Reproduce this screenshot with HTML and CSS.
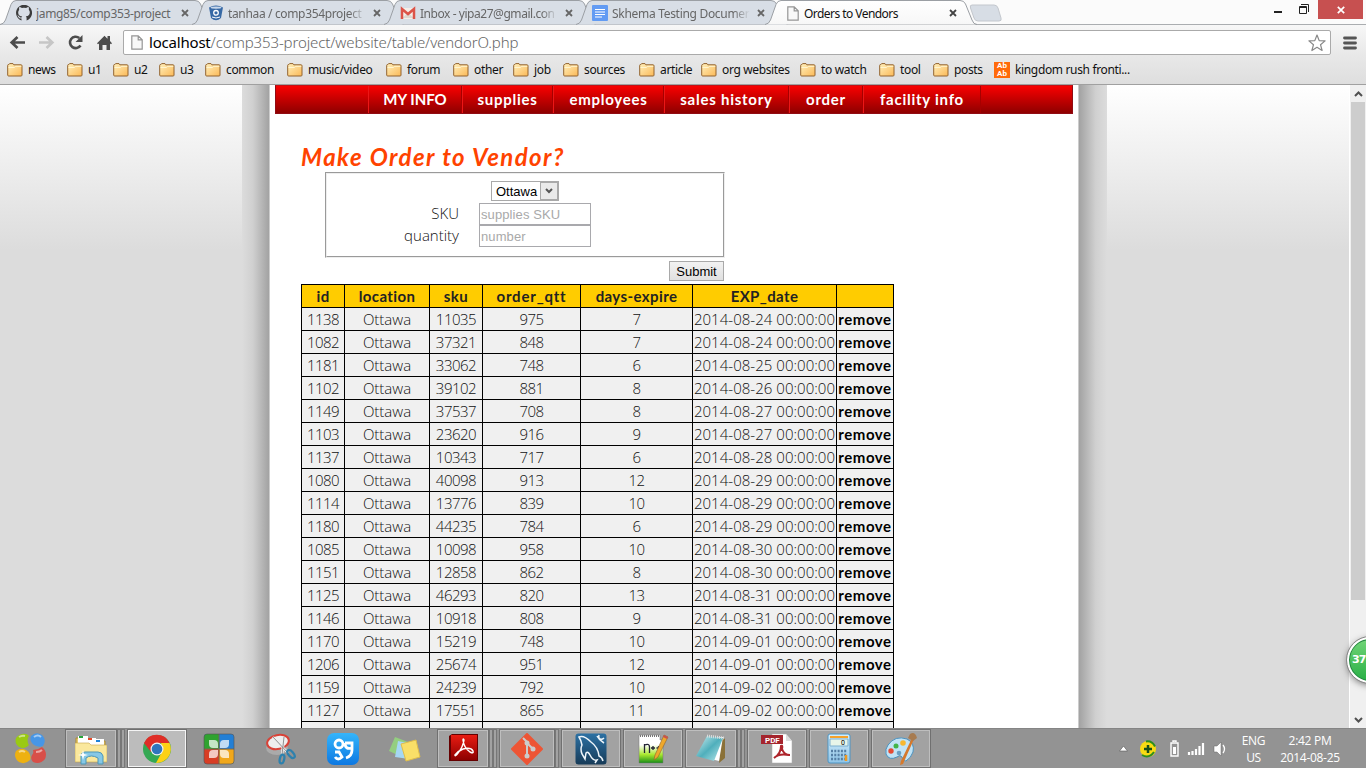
FILE: index.html
```html
<!DOCTYPE html>
<html lang="en">
<head>
<meta charset="utf-8">
<title>Orders to Vendors</title>
<link rel="stylesheet" href="styles.css">
</head>
<body>
<svg class="defs" width="0" height="0">
  <defs>
    <linearGradient id="folderFill" x2="1" y2="1"><stop offset="0" stop-color="#fff0bd"/><stop offset="1" stop-color="#fbb957"/></linearGradient>
    <linearGradient id="activeTab" x2="0" y2="1"><stop offset="0" stop-color="#fff"/><stop offset="1" stop-color="#f7f7f7"/></linearGradient>
    <linearGradient id="redFill" x2="0" y2="1"><stop offset="0" stop-color="#e81c12"/><stop offset="1" stop-color="#8d0000"/></linearGradient>
    <linearGradient id="blueFill" x2="0" y2="1"><stop offset="0" stop-color="#35b5fb"/><stop offset="1" stop-color="#0d78e2"/></linearGradient>
    <linearGradient id="seaFill" x2="0" y2="1"><stop offset="0" stop-color="#2c71a4"/><stop offset="1" stop-color="#173b58"/></linearGradient>
    <linearGradient id="nppFill" x2="0" y2="1"><stop offset=".35" stop-color="#fff"/><stop offset=".7" stop-color="#a9e82f"/><stop offset="1" stop-color="#188d17"/></linearGradient>
    <linearGradient id="tealFill" x2="1" y2="1"><stop offset="0" stop-color="#d4eff1"/><stop offset=".5" stop-color="#4fafbc"/><stop offset="1" stop-color="#bde9ec"/></linearGradient>
    <linearGradient id="calcFill" x2="0" y2="1"><stop offset="0" stop-color="#d5eefb"/><stop offset="1" stop-color="#8fc5e8"/></linearGradient>
    <symbol id="folder" viewBox="0 0 16 14"><path d="M.7 12.2V2.4Q.7 1.500 1.600 1.500H2L2.600.6H6l.8 1.200h7.200Q15 1.800 15 2.800v9.400Q15 13 14 13H1.700Q.7 13 .7 12.200Z" fill="url(#folderFill)" stroke="#92632f"/><path d="M1.500 4.500h6l1-1.200h5.800" fill="none" stroke="#fff5cf"/></symbol>
    <symbol id="page" viewBox="0 0 12 15"><path d="M.8.8h6.400l4 4v9.400H.8zM7.200.8v4h4" fill="#f8f8f8" stroke="#959595" stroke-width="1.200"/></symbol>
    <symbol id="x" viewBox="0 0 8 8"><path d="m1 1 6 6m0-6L1 7" stroke="currentColor" stroke-width="1.800"/></symbol>
    <symbol id="tab" viewBox="0 0 212 25"><path d="M0 24.500Q4 24 5.500 20L11 4.500Q12.500.5 16 .5H195Q199 .5 200.500 4L207 20Q208.500 24.500 212 24.500" stroke="#9b9fa4"/></symbol>
  </defs>
</svg>

<header class="browser">
  <div class="tabs">
    <div class="tab"><svg class="tab-shape"><use href="#tab"/></svg>
      <svg class="fav" viewBox="0 0 16 16"><path d="M5.500 15.400v-2q-2.200.4-3.200-1.500-.5-1-1.200-1.400 1.500-.2 2.500 1.400.8 1 2 .6.1-.8.6-1.200C3 11 2.200 9.300 2.200 7.200q0-1.500 1-2.500-.4-1.300.2-2.600 1.200 0 2.500 1 2-.5 4.200 0 1.300-1 2.500-1 .5 1.300.2 2.600 1 1 1 2.500c0 2.200-1 3.800-4 4.100q.8.7.8 2v2.100A8 8 0 1 0 5.500 15.400Z" fill="#3c3c3c"/></svg>
      <span class="tab-text t1">jamg85/comp353-project</span><svg class="close"><use href="#x"/></svg></div>
    <div class="tab"><svg class="tab-shape"><use href="#tab"/></svg>
      <svg class="fav" viewBox="0 0 16 16"><path d="M1 2.500 3 13q5 4.500 10 0l2-10.500Q8-1.500 1 2.500Z" fill="#3769a5"/><ellipse cx="8" cy="2.600" rx="5.500" ry="1.200" fill="#c8d8ec"/><circle cx="8" cy="7.800" r="2.300" fill="#3769a5" stroke="#fff" stroke-width="1.300"/><path d="M4 12q4 2 8 0" stroke="#fff" fill="none"/></svg>
      <span class="tab-text t2">tanhaa / comp354project</span><svg class="close"><use href="#x"/></svg></div>
    <div class="tab"><svg class="tab-shape"><use href="#tab"/></svg>
      <svg class="fav" viewBox="0 0 16 16"><path d="M1 3h14v11H1z" fill="#f4eee8"/><path d="m2 13 6-5 6 5z" fill="#ddd7cf"/><path d="M2 14V4l6 5 6-5v10" fill="none" stroke="#dc5449" stroke-width="2.500"/></svg>
      <span class="tab-text t3">Inbox - yipa27@gmail.con</span><svg class="close"><use href="#x"/></svg></div>
    <div class="tab"><svg class="tab-shape"><use href="#tab"/></svg>
      <svg class="fav" viewBox="0 0 16 16"><rect width="16" height="16" rx="1" fill="#629bf3"/><path d="M3 4.500h10M3 7h10M3 9.500h10M3 12h7" stroke="#fff"/></svg>
      <span class="tab-text t4">Skhema Testing Documer</span><svg class="close"><use href="#x"/></svg></div>
    <div class="tab active"><svg class="tab-shape"><use href="#tab"/></svg>
      <svg class="fav pagefav"><use href="#page"/></svg>
      <span class="tab-text t5">Orders to Vendors</span><svg class="close"><use href="#x"/></svg></div>
    <svg class="new-tab" viewBox="0 0 34 18"><path d="M3 1h22q3 0 4 3l3 10q1 3-2 3H9q-3 0-4-3L1.500 4Q.5 1 3 1Z" fill="#d7dde5" stroke="#c3c7cd"/></svg>
    <div class="window-buttons">
      <svg viewBox="0 0 46 20"><path d="M2 12h8" stroke="#222" stroke-width="2"/><path d="M27.500 6.500h7v7h-7zM29 4.500h7.500V12" fill="none" stroke="#222"/><path d="M27 7.500h8" stroke="#222"/></svg>
      <div class="window-close"><svg viewBox="0 0 8 8"><path d="m.8.8 6.400 6.400m0-6.400L.8 7.200" stroke="#fff" stroke-width="1.700"/></svg></div>
    </div>
  </div>
  <div class="toolbar">
    <svg class="nav-icons" viewBox="0 0 123 31">
      <g fill="none" stroke="#4c4c4c" stroke-width="2.700"><path d="M25 17.500H12M17.500 12l-5.800 5.500 5.800 5.500"/><path d="M39 17.500h13M46.500 12l5.800 5.500-5.800 5.500" stroke="#c6c6c6"/><path d="M80.500 20.500a5.700 5.700 0 1 1-1.200-7.500" stroke-width="2.600"/></g>
      <path d="M82.500 10v7h-7z" fill="#4c4c4c"/><path d="m97 18.200 7.500-7.500 3 3V11h2.500v5l2 2.200-1 1-1-.8V25h-3.500v-5h-4v5H99v-6.600l-1 .8z" fill="#4c4c4c"/>
    </svg>
    <div class="address"><svg class="addr-page"><use href="#page"/></svg><span class="url"><b>localhost</b>/comp353-project/website/table/vendorO.php</span>
      <svg class="star" viewBox="0 0 18 18"><path d="m9 1 2.200 5.600 5.900.3-4.600 3.800 1.600 5.800L9 13.300l-5.100 3.200 1.600-5.800L.9 6.900l5.900-.3z" fill="#fff" stroke="#888" stroke-width="1.200" stroke-linejoin="round"/></svg></div>
    <svg class="menu" viewBox="0 0 14 14"><path d="M1.500 2h11M1.500 7h11M1.500 12h11" stroke="#555" stroke-width="2.800" stroke-linecap="round"/></svg>
  </div>
  <nav class="bookmarks">
    <span><svg><use href="#folder"/></svg>news</span><span><svg><use href="#folder"/></svg>u1</span><span><svg><use href="#folder"/></svg>u2</span><span><svg><use href="#folder"/></svg>u3</span><span><svg><use href="#folder"/></svg>common</span><span><svg><use href="#folder"/></svg>music/video</span><span><svg><use href="#folder"/></svg>forum</span><span><svg><use href="#folder"/></svg>other</span><span><svg><use href="#folder"/></svg>job</span><span><svg><use href="#folder"/></svg>sources</span><span><svg><use href="#folder"/></svg>article</span><span><svg><use href="#folder"/></svg>org websites</span><span><svg><use href="#folder"/></svg>to watch</span><span><svg><use href="#folder"/></svg>tool</span><span><svg><use href="#folder"/></svg>posts</span><span><i class="abab">Ab<br>Ab</i>kingdom rush fronti...</span>
  </nav>
</header>

<div class="viewport">
  <div class="side left"></div>
  <div class="shade from-left"></div>
  <main>
    <nav class="site-nav"><span></span><a>MY INFO</a><a>supplies</a><a>employees</a><a>sales history</a><a>order</a><a>facility info</a><span></span></nav>
    <h1>Make Order to Vendor?</h1>
    <form>
      <div class="fields">
        <div class="select"><span>Ottawa</span><i><svg viewBox="0 0 8 6"><path d="m1 1 3 3 3-3" fill="none" stroke="#555" stroke-width="2"/></svg></i></div>
        <label>SKU</label><div class="input">supplies SKU</div>
        <label>quantity</label><div class="input">number</div>
      </div>
      <div class="submit">Submit</div>
    </form>
    <table>
      <colgroup><col class="c1"><col class="c2"><col class="c3"><col class="c4"><col class="c5"><col class="c6"><col class="c7"></colgroup>
      <tr><th>id<th>location<th>sku<th>order_qtt<th>days-expire<th>EXP_date<th></tr>
      <tr><td>1138<td>Ottawa<td>11035<td>975<td>7<td>2014-08-24 00:00:00<td>remove</tr>
      <tr><td>1082<td>Ottawa<td>37321<td>848<td>7<td>2014-08-24 00:00:00<td>remove</tr>
      <tr><td>1181<td>Ottawa<td>33062<td>748<td>6<td>2014-08-25 00:00:00<td>remove</tr>
      <tr><td>1102<td>Ottawa<td>39102<td>881<td>8<td>2014-08-26 00:00:00<td>remove</tr>
      <tr><td>1149<td>Ottawa<td>37537<td>708<td>8<td>2014-08-27 00:00:00<td>remove</tr>
      <tr><td>1103<td>Ottawa<td>23620<td>916<td>9<td>2014-08-27 00:00:00<td>remove</tr>
      <tr><td>1137<td>Ottawa<td>10343<td>717<td>6<td>2014-08-28 00:00:00<td>remove</tr>
      <tr><td>1080<td>Ottawa<td>40098<td>913<td>12<td>2014-08-29 00:00:00<td>remove</tr>
      <tr><td>1114<td>Ottawa<td>13776<td>839<td>10<td>2014-08-29 00:00:00<td>remove</tr>
      <tr><td>1180<td>Ottawa<td>44235<td>784<td>6<td>2014-08-29 00:00:00<td>remove</tr>
      <tr><td>1085<td>Ottawa<td>10098<td>958<td>10<td>2014-08-30 00:00:00<td>remove</tr>
      <tr><td>1151<td>Ottawa<td>12858<td>862<td>8<td>2014-08-30 00:00:00<td>remove</tr>
      <tr><td>1125<td>Ottawa<td>46293<td>820<td>13<td>2014-08-31 00:00:00<td>remove</tr>
      <tr><td>1146<td>Ottawa<td>10918<td>808<td>9<td>2014-08-31 00:00:00<td>remove</tr>
      <tr><td>1170<td>Ottawa<td>15219<td>748<td>10<td>2014-09-01 00:00:00<td>remove</tr>
      <tr><td>1206<td>Ottawa<td>25674<td>951<td>12<td>2014-09-01 00:00:00<td>remove</tr>
      <tr><td>1159<td>Ottawa<td>24239<td>792<td>10<td>2014-09-02 00:00:00<td>remove</tr>
      <tr><td>1127<td>Ottawa<td>17551<td>865<td>11<td>2014-09-02 00:00:00<td>remove</tr>
      <tr><td><td><td><td><td><td><td></tr>
    </table>
  </main>
  <div class="shade from-right"></div>
  <div class="side right"></div>
  <div class="scrollbar"><svg viewBox="0 0 15 17"><path d="m4 11 3.500-3.500L11 11" fill="none" stroke="#505050" stroke-width="2"/></svg><div class="thumb"></div><svg viewBox="0 0 15 17"><path d="M4 7l3.500 3.500L11 7" fill="none" stroke="#505050" stroke-width="2"/></svg></div>
  <div class="badge">37</div>
</div>

<footer class="taskbar">
  <div class="start"><svg viewBox="0 0 32 32"><path d="M8 2Q13 1 15 4 12 8 15 13 11 18 5 15 0 11 2 6 4 3 8 2Z" fill="#9aca12"/><path d="M17 4q5-5 11-1 5 5 1 11-4 2-9-1-5-4-3-9Z" fill="#4796e6"/><path d="M2 19q5-4 10-1 6 4 4 10-5 5-11 2-6-5-3-11Z" fill="#eeb111"/><path d="M19 18q5 0 9-3 6 5 3 12-5 6-12 3-3-3-1-7 2-2 1-5Z" fill="#d84f49"/><path d="M5 5q3-2 6-1M20 5q4-3 7 0M5 20q3-2 6 0M22 20q4 0 6-2" stroke="#fff" opacity=".5" stroke-width="2" fill="none"/></svg></div>
  <div class="task stack"><div><svg viewBox="0 0 32 32"><path d="M1 5h12l2 3h15v19H1z" fill="#e6cb70" stroke="#b08c31"/><path d="M3 3h10v8H3zM12 5h9v7h-9zM20 6h9v8h-9z" fill="#fff"/><path d="M4 4h4" stroke="#27a63b" stroke-width="2"/><path d="M13 6h4" stroke="#e64626" stroke-width="2"/><path d="M21 8h4" stroke="#1d83dc" stroke-width="2"/><path d="M0 10h14l2 2h16v17H0z" fill="#fae89d" stroke="#c8a64c" stroke-width=".6"/><path d="M6 31v-9q1-3 4-3h13q4 0 5 4v8h-5v-6q-7-4-12 0v6z" fill="#86c8e6" stroke="#4d97b7"/><path d="m8 17 1 4 4 1-4 1-1 4-1-4-4-1 4-1z" fill="#fff"/></svg></div><i></i><i></i></div>
  <div class="task current"><div><svg viewBox="0 0 32 32"><circle cx="16" cy="16" r="14" fill="#34a853"/><path d="M3 10A14 14 0 0 1 28.500 10H16L10 19Z" fill="#df2d27"/><path d="M28.500 10A14 14 0 0 1 15 30L22 17 20 10Z" fill="#fcd116"/><circle cx="16" cy="16" r="6.500" fill="#f2f2f2"/><circle cx="16" cy="16" r="5.300" fill="#2f75bd"/></svg></div></div>
  <div class="task plain"><div><svg viewBox="0 0 32 32"><rect x="1" y="1" width="30" height="30" rx="3" fill="#237fd5"/><path d="M1 4q0-3 3-3h12v15H1z" fill="#2fa32f"/><path d="M1 16h15v15H4q-3 0-3-3z" fill="#d83d24"/><path d="M16 16h15v12q0 3-3 3H16z" fill="#f0a71b"/><path d="M6 7h5q4 0 4 4v4h-5q-4 0-4-4zM26 7h-5q-4 0-4 4v4h5q4 0 4-4zM6 25h5q4 0 4-4v-4h-5q-4 0-4 4zM26 25h-5q-4 0-4-4v-4h5q4 0 4 4z" fill="#fff" opacity=".72"/><path d="M16 1v30M1 16h30" stroke="#765"/><rect x="1" y="1" width="30" height="30" rx="3" fill="none" stroke="#555" stroke-opacity=".6"/></svg></div></div>
  <div class="task plain"><div><svg viewBox="0 0 32 32"><ellipse cx="12" cy="15" rx="11" ry="7" fill="#aaa"/><ellipse cx="13" cy="9" rx="11" ry="7" fill="#eee" stroke="#d84237" stroke-width="2" transform="rotate(-12 13 9)"/><path d="m8 4 15 16M19 4l-2 18" stroke="#eee" stroke-width="2.500"/><path d="m8 4 15 16M19 4l-2 18" stroke="#777" stroke-width=".8"/><ellipse cx="17" cy="26" rx="2.200" ry="4.500" fill="none" stroke="#2e81ad" stroke-width="2.300" transform="rotate(12 17 26)"/><ellipse cx="26" cy="21" rx="2.500" ry="4.800" fill="none" stroke="#2e81ad" stroke-width="2.300" transform="rotate(-40 26 21)"/></svg></div></div>
  <div class="task plain"><div><svg viewBox="0 0 32 32"><rect width="32" height="32" rx="7" fill="url(#blueFill)"/><g fill="none" stroke="#fff" stroke-width="2.800"><circle cx="12" cy="11" r="4"/><path d="M8 19h4l3 5q-4 4-7 0M18 10h7v7q0 6-6 8M18 10q0 7 7 5"/></g></svg></div></div>
  <div class="task plain"><div><svg viewBox="0 0 32 32"><path d="m6 4 13 5-6 15-13-6z" fill="#94ce80"/><path d="m9 8 14 3-3 15-14-2z" fill="#a5d7f4"/><path d="m12 11 15-4 4 17-14 4z" fill="#f9df68" stroke="#dfbd4b"/></svg></div></div>
  <div class="task stack"><div><svg viewBox="0 0 32 32"><path d="M2 3 5 1h26v27H2z" fill="#600"/><rect x="4" y="2" width="26" height="25" fill="url(#redFill)"/><path d="M8 22q3-4 8-6 8-2 10 2 1 3-3 1-6-4-7-12 0-2 1 0-1 7-6 13-3 4-3 2Z" fill="none" stroke="#fff" stroke-width="1.500"/></svg></div><i></i><i></i></div>
  <div class="task stack"><div><svg viewBox="0 0 32 32"><path d="m16 1 15 15-15 15L1 16z" fill="#ed5535" stroke="#ed5535" stroke-width="2" stroke-linejoin="round"/><path d="m12 5 4 4v15m0-14 6 6" fill="none" stroke="#ccc" stroke-width="2"/><g fill="#ccc"><circle cx="16" cy="10" r="2.500"/><circle cx="16" cy="23" r="2.500"/><circle cx="22" cy="16" r="2.500"/></g></svg></div><i></i></div>
  <div class="task"><div><svg viewBox="0 0 32 32"><rect x=".5" y=".5" width="31" height="31" rx="3" fill="url(#seaFill)"/><path d="M28 28q-1-4-4-5-1-9-8-14Q9 2 4 4q2 3 3 8-2 4 0 9l3 5 1-6q2-2 4 2 3 6 7 5l-2 3M22 3q2 4 7 7M24 2q-1 3 1 4t4-1" fill="none" stroke="#eef5fa" stroke-width="1.500"/></svg></div></div>
  <div class="task"><div><svg viewBox="0 0 32 32"><path d="M2 2h21v5h3v23H2z" fill="url(#nppFill)" stroke="#777" stroke-width=".5"/><path d="M3 3h20" stroke="#777" stroke-width="2" stroke-dasharray="1 1"/><path d="M7.500 20v-9M7.500 12q5-2 5 2v6M14 15h4M16 13v4M19.500 15h4M21.500 13v4" fill="none" stroke="#223" stroke-width="1.300"/><path d="m27 2 4 2-10 20-4 3 1-5z" fill="#efa82b" stroke="#8b6230" stroke-width=".6"/><path d="m27 2 4 2-1 2-4-2z" fill="#c85250"/></svg></div></div>
  <div class="task stack"><div><svg viewBox="0 0 32 32"><path d="m27 4 3 2v19l-6 5z" fill="#8a7138"/><path d="m28 4-4 24-20-5 8-19z" fill="#fff"/><path d="m12 3 16 2-9 23L1 23z" fill="url(#tealFill)"/><path d="m12 3 17 2" stroke="#ddd" stroke-width="3" stroke-dasharray="1 1"/></svg></div><i></i><i></i></div>
  <div class="task"><div><svg viewBox="0 0 32 32"><path d="M11 1h14l6 7v22H11z" fill="#fff" stroke="#aaa" stroke-width=".5"/><path d="M25 1v7h6" fill="#ddd"/><path d="M0 2h22v9H0z" fill="#a5242d"/><text x="4" y="9.500" fill="#fff" font-family="Roboto" font-size="8" font-weight="700">PDF</text><path d="M13 25q7-4 7-12 2-1 1 3 2 6 8 6M13 25q5-5 15-3" fill="none" stroke="#ae252c" stroke-width="2"/></svg></div></div>
  <div class="task"><div><svg viewBox="0 0 32 32"><rect x="5" y="1" width="22" height="29" rx="2" fill="url(#calcFill)" stroke="#4d94c3"/><path d="M7 4h18" stroke="#f5a22b" stroke-width="2"/><path d="M7 6h18v7H7z" fill="#e8f5e9" stroke="#7cafcf"/><text x="18" y="12" font-family="Roboto" font-size="7">0</text><path d="M8 18h16M8 22h16M8 26h16" stroke="#557fa5" stroke-width="2.500" stroke-dasharray="2 1.300"/><path d="M23 22v6" stroke="#ee9a23" stroke-width="2.500"/></svg></div></div>
  <div class="task"><div><svg viewBox="0 0 32 32"><path d="M3 12Q10 2 22 6q8 4 6 13-2 6-7 9-3 1-4-4-2-3-5 0-8 4-11-3-1-5 2-9Z" fill="#c1e3f5" stroke="#4a91bf"/><circle cx="6" cy="18" r="2.700" fill="#e64b34"/><circle cx="11" cy="13" r="2.500" fill="#42b549"/><circle cx="18" cy="10" r="2.800" fill="#f7b72f"/><circle cx="14" cy="20" r="2.300" fill="#6a9fc2"/><path d="m27 5 2 1-11 25-3 1 1-4z" fill="#d5792c"/><path d="M25 1q5-3 7 4l-4 3-5-3z" fill="#a77b50"/></svg></div></div>
  <div class="tray">
    <svg viewBox="0 0 116 26"><path d="M.5 16h8L4.500 11z" fill="#fff" stroke="#555" stroke-width=".6"/><circle cx="29" cy="14" r="8" fill="#f8db12"/><path d="M27 6.500q6-1 9 5M23 20q7 4 12-3" stroke="#2c8d20" stroke-width="2" fill="none"/><path d="M29 10v8M25 14h8" stroke="#164e18" stroke-width="2.500"/><g fill="none" stroke="#fff" stroke-width="1.400"><path d="M52 8h7v13h-7zM54 7V6h3v1"/></g><path d="M54 12h3v7h-3z" fill="#fff"/><path d="M70 20v-3M73.500 20v-4M77 20v-6M80.500 20V11M84 20V8" stroke="#fff" stroke-width="2.200"/><path d="M95 11h3l4-4v14l-4-4h-3z" fill="#fff" stroke="#666" stroke-width=".5"/><path d="M104 10q3 4 0 8" fill="none" stroke="#fff" stroke-width="1.300"/></svg>
    <div class="lang">ENG<br>US</div><div class="clock">2:42 PM<br>2014-08-25</div>
  </div>
</footer>
</body>
</html>
```
FILE: styles.css
```css
* { box-sizing: border-box; }
body { margin: 0; width: 1366px; height: 768px; overflow: hidden; display: flex; flex-direction: column; background: #fff; font-family: "Noto Sans", sans-serif; font-size: 12px; color: #222; }
svg { display: block; flex: none; }
.defs { position: absolute; }

.browser { height: 85px; flex: none; border-bottom: 1px solid #a0a0a0; background: #fbfbfb; }
.tabs { height: 24px; display: flex; padding-left: 4px; }
.tab { position: relative; width: 192px; height: 24px; display: flex; align-items: center; padding: 2px 0 0 12px; color: #666; }
.tab-shape { position: absolute; left: -4px; top: 0; width: 212px; height: 25px; fill: #d8dee6; }
.active .tab-shape { fill: url(#activeTab); left: -7px; }
.tab.active { width: 202px; padding-left: 15px; color: #111; z-index: 2; }
.fav { position: relative; width: 16px; height: 16px; margin-right: 4px; }
.pagefav { width: 12px; height: 15px; margin-right: 5px; }
.tab-text { position: relative; width: 138px; overflow: hidden; white-space: nowrap; letter-spacing: -.35px; }
.tab-text.t3 { letter-spacing: -.45px; }
.tab-text.t4 { letter-spacing: -.3px; }
.tab-text.t5 { letter-spacing: -.55px; }
.tab:not(.active) .tab-text { -webkit-mask-image: linear-gradient(90deg, #000 88%, transparent); }
.tab .tab-text.t1 { -webkit-mask-image: none; }
.close { position: relative; width: 8px; height: 8px; margin-left: 7px; color: #666; }
.active .close { color: #444; }
.new-tab { width: 34px; height: 18px; margin: 4px 0 0 -5px; position: relative; }
.window-buttons { margin-left: auto; margin-right: 3px; display: flex; }
.window-buttons > svg { width: 46px; height: 20px; }
.window-close { width: 45px; height: 19px; background: #c75050; display: flex; align-items: center; justify-content: center; }
.window-close svg { width: 8px; height: 8px; }

.toolbar { height: 32px; border-top: 1px solid #aaadb0; display: flex; background: linear-gradient(#f7f7f7, #e8e8e8); }
.nav-icons { width: 123px; height: 31px; }
.address { width: 1208px; height: 25px; margin-top: 5px; border: 1px solid #aaa; border-radius: 2px; background: #fff; display: flex; align-items: center; padding-left: 7px; }
.addr-page { width: 12px; height: 15px; }
.url { margin: -1px 0 0 6px; font-size: 15px; font-weight: 300; color: #666; white-space: nowrap; letter-spacing: -.12px; }
.url b { color: #000; font-weight: 400; letter-spacing: -.2px; }
.star { width: 18px; height: 18px; margin-left: auto; margin-right: 4px; }
.menu { width: 14px; height: 14px; margin: 11px 0 0 12px; }
.bookmarks { height: 28px; display: grid; grid-template-columns: 60px 46px 46px 46px 82px 99px 67px 60px 50px 76px 62px 99px 79px 54px 61px 1fr; align-items: center; padding: 0 0 1px 7px; background: linear-gradient(#e8e8e8, #dedede); color: #111; letter-spacing: -.35px; }
.bookmarks span { display: flex; align-items: center; white-space: nowrap; }
.bookmarks svg { width: 16px; height: 14px; margin-right: 5px; }
.abab { width: 16px; height: 16px; margin-right: 5px; background: #ff6a0a; color: #fff; font: 700 8px/8px Roboto, sans-serif; text-align: center; letter-spacing: 0; }

.viewport { position: relative; height: 643px; flex: none; overflow: hidden; display: flex; background: #dcdcdc; }
.side { width: 242px; height: 165px; background: linear-gradient(#fff, #dcdcdc); flex: none; }
.shade { width: 27px; flex: none; background: linear-gradient(90deg, #dcdcdc, #d0d0d0 40%, #a2a2a2); }
.shade.from-right { width: 28px; background: linear-gradient(270deg, #dcdcdc, #d0d0d0 40%, #a2a2a2); }
main { width: 810px; flex: none; padding: 0 5px; border: solid #ccc; border-width: 0 1px; background: #fff; font-family: "Open Sans", sans-serif; }
.site-nav { height: 29px; border: 1px solid #910c14; border-top-color: #c41116; display: grid; grid-template-columns: 92px 94px 91px 111px 125px 74px 118px 1fr; background: linear-gradient(#f90000, #8e0000); color: #fff; font: 700 15px/27px Lato, sans-serif; text-align: center; letter-spacing: .75px; }
.site-nav a { border-left: 1px solid #ec1717; border-right: 1px solid #a60000; white-space: nowrap; }
.site-nav a:nth-child(2) { letter-spacing: 0; }
h1 { margin: 28px 0 0 26px; height: 30px; color: #ff4300; font: italic 700 24px/29px Lato, sans-serif; letter-spacing: 1.42px; white-space: nowrap; }
form { width: 400px; margin-left: 50px; }
.fields { height: 86px; border: 2px groove #eee; padding: 7px 0 0 0; display: grid; grid-template-columns: 132px 20px 112px; grid-template-rows: 22px 22px 22px; }
.select { grid-column: 1 / -1; margin-left: 164px; width: 68px; height: 20px; border: 1px solid #a9a9a9; display: flex; justify-content: space-between; color: #000; font: 13px/19px "Liberation Sans", sans-serif; padding-left: 4px; }
.select i { width: 18px; border: 1px solid #a9a9a9; background: #eaeaea; display: flex; align-items: center; justify-content: center; }
.select svg { width: 8px; height: 6px; }
label { text-align: right; font-size: 15px; font-weight: 300; line-height: 20px; white-space: nowrap; color: #111; }
.input { grid-column: 3; height: 22px; border: 1px solid #a9a9ad; color: #a9a9a9; background: #fff; font: 13px/21px "Liberation Sans", sans-serif; padding-left: 1px; letter-spacing: .1px; }
.submit { width: 55px; height: 20px; margin: 3px 1px 3px auto; border: 1px solid #a9a9a9; background: linear-gradient(#f2f2f2, #e0e0e0); color: #000; font: 13px/19px "Liberation Sans", sans-serif; text-align: center; }
table { width: 593px; margin-left: 26px; table-layout: fixed; border-collapse: separate; border-spacing: 0; border: solid #000; border-width: 1px 0 0 1px; }
.c1 { width: 43px; } .c2 { width: 85px; } .c3 { width: 53px; } .c4 { width: 98px; } .c5 { width: 112px; } .c6 { width: 144px; } .c7 { width: 57px; }
th, td { height: 23px; padding: 1px 0; border: solid #000; border-width: 0 1px 1px 0; line-height: 20px; text-align: center; white-space: nowrap; }
th { background: #fc0; font: 700 15px/20px Lato, sans-serif; letter-spacing: .4px; }
th:nth-child(4) { letter-spacing: .8px; }
td { background: #f0f0f0; color: #111; font-weight: 300; font-size: 15px; letter-spacing: -.5px; }
td:nth-child(2) { letter-spacing: 0; }
td:nth-child(6) { letter-spacing: .03px; }
td:last-child { font: 700 15px/20px Lato, sans-serif; color: #000; letter-spacing: .55px; }
.scrollbar { width: 17px; margin-left: auto; padding: 0 1px; border-left: 1px solid #fff; background: #f0f0f0; display: flex; flex-direction: column; }
.scrollbar svg { width: 15px; height: 17px; }
.thumb { height: 498px; background: #cdcdcd; margin-bottom: auto; }
.badge { position: absolute; left: 1347px; top: 552px; width: 46px; height: 46px; border: 2px solid #fff; border-radius: 50%; outline: 1px solid #888; background: linear-gradient(#72d578, #28af45); box-shadow: inset 0 0 0 1px #248342, 0 2px 7px #777; color: #fff; font: 700 11px/42px "DejaVu Sans", sans-serif; padding-left: 3px; letter-spacing: -1px; }

.taskbar { height: 40px; flex: none; display: grid; grid-template-columns: 65px repeat(14, 62px) 1fr; border-top: 1px solid #858585; background: #939393; }
.start { padding: 3px 0 0 14px; }
.taskbar svg { width: 32px; height: 32px; }
.task { height: 39px; padding-right: 2px; display: flex; }
.task > div { flex: 1; border: 1px solid #707070; box-shadow: inset 0 0 0 1px #bebebe; background: #a2a2a2; display: flex; align-items: center; justify-content: center; }
.task > i { width: 4px; border: solid #bebebe; border-width: 1px 1px 1px 0; outline: 1px solid #777; outline-offset: -1px; background: #a2a2a2; }
.task.current > div { background: #bcbcbc; box-shadow: inset 0 0 0 1px #f4f4f4; }
.task.plain > div { background: none; box-shadow: none; border-color: transparent; }
.tray { display: flex; color: #fff; padding-left: 186px; }
.taskbar .tray svg { width: 116px; height: 26px; margin-top: 6px; }
.lang, .clock { margin-top: 3px; text-align: center; font: 12px/17px "Open Sans", sans-serif; letter-spacing: -.3px; white-space: nowrap; }
.lang { width: 37px; }
.clock { width: 76px; }
```
